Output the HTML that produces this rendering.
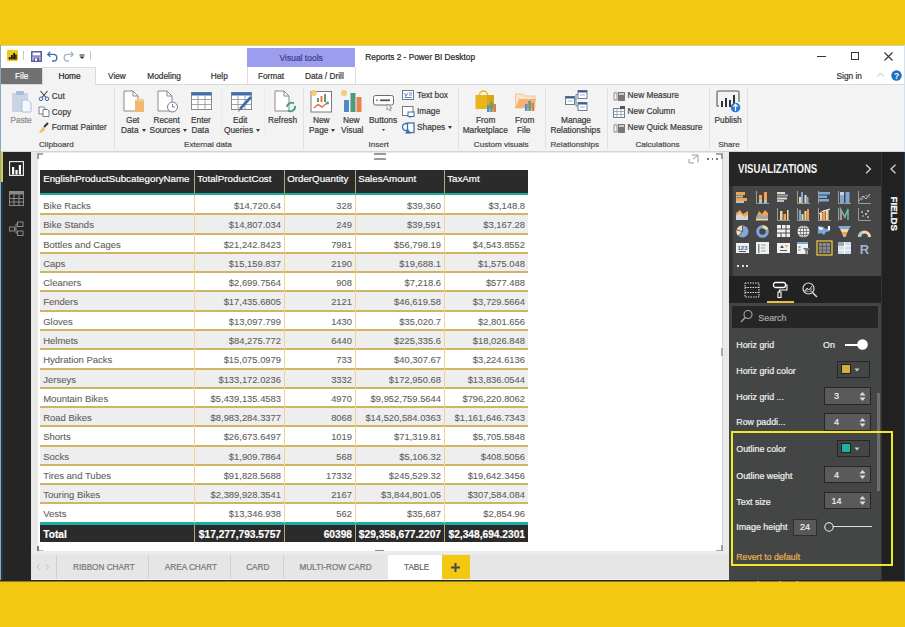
<!DOCTYPE html>
<html><head><meta charset="utf-8">
<style>
*{box-sizing:border-box;margin:0;padding:0}
html,body{width:905px;height:627px;overflow:hidden}
body{position:relative;background:#F2C811;font-family:"Liberation Sans",sans-serif;color:#333}
.a{position:absolute}
.t{position:absolute;white-space:nowrap;line-height:1;-webkit-text-stroke:0.2px currentColor}
svg{position:absolute;overflow:visible}
</style></head>
<body>
<div class="a" style="left:0px;top:45px;width:905px;height:536px;background:#fff;"></div>
<div class="a" style="left:0px;top:45px;width:905px;height:1px;background:#d7cf9a;"></div>
<div class="a" style="left:0px;top:45px;width:1px;height:536px;background:#8aa6bd;"></div>
<div class="a" style="left:904px;top:45px;width:1px;height:107px;background:#d5e0ea;"></div>
<div class="a" style="left:7px;top:50px;width:11px;height:11px;background:#F2C811;border-radius:1px"></div>
<svg style="left:7px;top:50px" width="11" height="11" viewBox="0 0 11 11"><rect x="1.8" y="7" width="1.8" height="2.5" fill="#1a1a1a"/><rect x="4" y="5" width="1.8" height="4.5" fill="#1a1a1a"/><rect x="6.2" y="3" width="1.8" height="6.5" fill="#1a1a1a"/><rect x="8.2" y="4.5" width="1.5" height="5" fill="#1a1a1a"/></svg>
<div class="a" style="left:23px;top:51px;width:1px;height:9px;background:#c8c8c8;"></div>
<svg style="left:31px;top:51px" width="11" height="11" viewBox="0 0 11 11"><path d="M0.8 0.8 H10.2 V10.2 H0.8Z" fill="#fff" stroke="#5d5ca6" stroke-width="1.6"/><rect x="2.5" y="6.3" width="6" height="4" fill="#5d5ca6"/><rect x="4" y="7.3" width="2" height="2.5" fill="#fff"/><rect x="1.5" y="4.5" width="8" height="1.2" fill="#5d5ca6"/></svg>
<svg style="left:47px;top:51px" width="11" height="11" viewBox="0 0 11 11"><path d="M3.2 0.8 L0.8 3.4 L3.4 5.8" fill="none" stroke="#3f6db5" stroke-width="1.4"/><path d="M1.2 3.4 H6.5 A3.3 3.3 0 0 1 6.5 10 H5" fill="none" stroke="#3f6db5" stroke-width="1.4"/></svg>
<svg style="left:63px;top:51px" width="11" height="11" viewBox="0 0 11 11"><path d="M7.8 0.8 L10.2 3.4 L7.6 5.8" fill="none" stroke="#a6b4c8" stroke-width="1.4"/><path d="M9.8 3.4 H4.5 A3.3 3.3 0 0 0 4.5 10 H6" fill="none" stroke="#a6b4c8" stroke-width="1.4"/></svg>
<svg style="left:79px;top:54px" width="6" height="6" viewBox="0 0 6 6"><rect x="0.5" y="0.5" width="5" height="1" fill="#222"/><path d="M0.5 2.5 H5.5 L3 5Z" fill="#222"/></svg>
<div class="a" style="left:90px;top:51px;width:1px;height:9px;background:#c8c8c8;"></div>
<div class="t" style="top:52.50px;font-size:8.3px;color:#262626;left:365.30px;">Reports 2 - Power BI Desktop</div>
<div class="a" style="left:817px;top:56px;width:9px;height:1px;background:#333;"></div>
<div class="a" style="left:851px;top:52px;width:8px;height:8px;border:1px solid #333"></div>
<svg style="left:884px;top:52px" width="9" height="9" viewBox="0 0 9 9"><path d="M0.5 0.5 L8.5 8.5 M8.5 0.5 L0.5 8.5" stroke="#333" stroke-width="1.1"/></svg>
<div class="a" style="left:247px;top:48px;width:108px;height:19px;background:#9D9DEF;"></div>
<div class="t" style="top:53.70px;font-size:8.5px;color:#3c3c86;left:279.50px;">Visual tools</div>
<div class="a" style="left:247px;top:67px;width:1px;height:17px;background:#dcdcec;"></div>
<div class="a" style="left:355px;top:67px;width:1px;height:17px;background:#dcdcec;"></div>
<div class="a" style="left:1px;top:68px;width:41px;height:16px;background:#717171;"></div>
<div class="t" style="top:72.00px;font-size:8.3px;color:#fff;left:15.00px;">File</div>
<div class="t" style="top:72.00px;font-size:8.3px;color:#333;left:108.00px;">View</div>
<div class="t" style="top:72.00px;font-size:8.3px;color:#333;left:147.30px;">Modeling</div>
<div class="t" style="top:72.00px;font-size:8.3px;color:#333;left:210.70px;">Help</div>
<div class="t" style="top:72.00px;font-size:8.3px;color:#333;left:257.90px;">Format</div>
<div class="t" style="top:72.00px;font-size:8.3px;color:#333;left:305.00px;">Data / Drill</div>
<div class="t" style="top:72.00px;font-size:8.3px;color:#333;left:836.50px;">Sign in</div>
<svg style="left:877px;top:72px" width="7" height="5" viewBox="0 0 7 5"><path d="M0.5 4.5 L3.5 1 L6.5 4.5" fill="none" stroke="#bbb" stroke-width="1"/></svg>
<svg style="left:891px;top:70px" width="11" height="11" viewBox="0 0 11 11"><circle cx="5.5" cy="5.5" r="5.2" fill="#1e6fc4"/><text x="5.5" y="9" font-size="8.5" font-weight="bold" text-anchor="middle" fill="#fff" font-family="Liberation Sans">?</text></svg>
<div class="a" style="left:1px;top:84px;width:903px;height:68px;background:#F3F3F3;border-top:1px solid #dadada;border-bottom:1px solid #d4d4d4"></div>
<div class="a" style="left:42px;top:67px;width:54px;height:18px;background:#F3F3F3;border:1px solid #dadada;border-bottom:none"></div>
<div class="t" style="top:72.00px;font-size:8.3px;color:#222;left:58.50px;">Home</div>
<div class="a" style="left:114px;top:88px;width:1px;height:61px;background:#e1e1e1;"></div>
<div class="a" style="left:303px;top:88px;width:1px;height:61px;background:#e1e1e1;"></div>
<div class="a" style="left:458px;top:88px;width:1px;height:61px;background:#e1e1e1;"></div>
<div class="a" style="left:545px;top:88px;width:1px;height:61px;background:#e1e1e1;"></div>
<div class="a" style="left:607px;top:88px;width:1px;height:61px;background:#e1e1e1;"></div>
<div class="a" style="left:709px;top:88px;width:1px;height:61px;background:#e1e1e1;"></div>
<div class="a" style="left:747px;top:88px;width:1px;height:61px;background:#e1e1e1;"></div>
<div class="a" style="left:221px;top:88px;width:1px;height:46px;background:#ececec;"></div>
<div class="a" style="left:264px;top:88px;width:1px;height:46px;background:#ececec;"></div>
<div class="t" style="top:141.00px;font-size:8.1px;color:#484848;left:39.00px;">Clipboard</div>
<div class="t" style="top:141.00px;font-size:8.1px;color:#484848;left:184.00px;">External data</div>
<div class="t" style="top:141.00px;font-size:8.1px;color:#484848;left:368.50px;">Insert</div>
<div class="t" style="top:141.00px;font-size:8.1px;color:#484848;left:473.80px;">Custom visuals</div>
<div class="t" style="top:141.00px;font-size:8.1px;color:#484848;left:550.50px;">Relationships</div>
<div class="t" style="top:141.00px;font-size:8.1px;color:#484848;left:635.40px;">Calculations</div>
<div class="t" style="top:141.00px;font-size:8.1px;color:#484848;left:718.20px;">Share</div>
<svg style="left:11px;top:90px" width="22" height="24" viewBox="0 0 22 24"><rect x="1" y="3" width="16" height="19" fill="#c9d5e6"/><rect x="5" y="1" width="8" height="4" rx="1" fill="#a9bcd8"/><path d="M11 10 H17 L20 13 V22 H11 Z" fill="#f0f8fc" stroke="#a8c4dc" stroke-width="1"/></svg>
<div class="t" style="top:116.00px;font-size:8.3px;color:#8a8a8a;left:10.50px;">Paste</div>
<svg style="left:38px;top:90px" width="12" height="11" viewBox="0 0 12 11"><path d="M2.5 1 L8 7.5 M9.5 1 L4 7.5" stroke="#444" stroke-width="1.1" fill="none"/><circle cx="3" cy="8.8" r="1.8" fill="none" stroke="#3a66b0" stroke-width="1"/><circle cx="9" cy="8.8" r="1.8" fill="none" stroke="#3a66b0" stroke-width="1"/></svg>
<div class="t" style="top:91.80px;font-size:8.3px;color:#3a3a3a;left:51.80px;">Cut</div>
<svg style="left:38px;top:106px" width="12" height="11" viewBox="0 0 12 11"><path d="M1 1 H6 L7 2 V8 H1Z" fill="#fff" stroke="#777" stroke-width="0.9"/><path d="M5 3.5 H9.5 L11 5 V10.5 H5Z" fill="#fff" stroke="#5a6f90" stroke-width="0.9"/></svg>
<div class="t" style="top:107.50px;font-size:8.3px;color:#3a3a3a;left:51.80px;">Copy</div>
<svg style="left:38px;top:122px" width="12" height="11" viewBox="0 0 12 11"><path d="M1 10 L5 5 L7.5 7.5 L3 11Z" fill="#e8c070"/><path d="M6 5 L10 1" stroke="#333" stroke-width="2"/></svg>
<div class="t" style="top:123.30px;font-size:8.3px;color:#3a3a3a;left:51.80px;">Format Painter</div>
<svg style="left:123px;top:90px" width="22" height="23" viewBox="0 0 22 23"><path d="M1 1 H10 L15 6 V21 H1Z" fill="#fff" stroke="#8a8a8a" stroke-width="1"/><path d="M10 1 V6 H15" fill="none" stroke="#8a8a8a" stroke-width="1"/><rect x="12" y="10" width="9" height="12" fill="#f0b870"/><ellipse cx="16.5" cy="10" rx="4.5" ry="1.3" fill="#f6cc90"/></svg>
<div class="t" style="top:116.30px;font-size:8.3px;color:#3a3a3a;left:126.00px;">Get</div>
<div class="t" style="top:126.00px;font-size:8.3px;color:#3a3a3a;left:121.00px;">Data<span style="display:inline-block;width:0;height:0;border-left:2px solid transparent;border-right:2px solid transparent;border-top:3px solid currentColor;vertical-align:1px;margin-left:3px;-webkit-text-stroke:0"></span></div>
<svg style="left:157px;top:90px" width="22" height="24" viewBox="0 0 22 24"><path d="M1 1 H10 L15 6 V21 H1Z" fill="#fff" stroke="#8a8a8a" stroke-width="1"/><path d="M10 1 V6 H15" fill="none" stroke="#8a8a8a" stroke-width="1"/><circle cx="15.5" cy="17" r="5" fill="#fff" stroke="#6f7f98" stroke-width="1"/><path d="M15.5 14 V17 H18" fill="none" stroke="#6f7f98" stroke-width="1"/></svg>
<div class="t" style="top:116.30px;font-size:8.3px;color:#3a3a3a;left:153.50px;">Recent</div>
<div class="t" style="top:126.00px;font-size:8.3px;color:#3a3a3a;left:149.60px;">Sources<span style="display:inline-block;width:0;height:0;border-left:2px solid transparent;border-right:2px solid transparent;border-top:3px solid currentColor;vertical-align:1px;margin-left:3px;-webkit-text-stroke:0"></span></div>
<svg style="left:191px;top:92px" width="22" height="19" viewBox="0 0 22 19"><rect x="0.5" y="0.5" width="20" height="17" fill="#fff" stroke="#8a8a8a" stroke-width="1"/><rect x="0.5" y="0.5" width="20" height="3" fill="#3d6db0"/><path d="M0.5 7.5 H20.5 M0.5 12.5 H20.5 M7 3.5 V17.5 M14 3.5 V17.5" stroke="#9a9a9a" stroke-width="0.9"/></svg>
<div class="t" style="top:116.30px;font-size:8.3px;color:#3a3a3a;left:191.00px;">Enter</div>
<div class="t" style="top:126.00px;font-size:8.3px;color:#3a3a3a;left:191.50px;">Data</div>
<svg style="left:231px;top:92px" width="22" height="21" viewBox="0 0 22 21"><rect x="0.5" y="0.5" width="20" height="17" fill="#fff" stroke="#8a8a8a" stroke-width="1"/><rect x="0.5" y="0.5" width="20" height="3" fill="#3d6db0"/><path d="M0.5 7.5 H20.5 M0.5 12.5 H20.5 M7 3.5 V17.5 M14 3.5 V17.5" stroke="#9a9a9a" stroke-width="0.9"/><path d="M20 5 L9 17" stroke="#3d6db0" stroke-width="2.6"/><path d="M9.5 16.5 L7.5 19.5" stroke="#3d6db0" stroke-width="1"/></svg>
<div class="t" style="top:116.30px;font-size:8.3px;color:#3a3a3a;left:233.00px;">Edit</div>
<div class="t" style="top:126.00px;font-size:8.3px;color:#3a3a3a;left:224.00px;">Queries<span style="display:inline-block;width:0;height:0;border-left:2px solid transparent;border-right:2px solid transparent;border-top:3px solid currentColor;vertical-align:1px;margin-left:3px;-webkit-text-stroke:0"></span></div>
<svg style="left:274px;top:90px" width="22" height="23" viewBox="0 0 22 23"><path d="M1 1 H10 L15 6 V21 H1Z" fill="#fff" stroke="#8a8a8a" stroke-width="1"/><path d="M10 1 V6 H15" fill="none" stroke="#8a8a8a" stroke-width="1"/><path d="M13 17 A4.5 4.5 0 0 1 20 13.5" fill="none" stroke="#3ca07a" stroke-width="1.8"/><path d="M21 16 A4.5 4.5 0 0 1 14 20.5" fill="none" stroke="#3ca07a" stroke-width="1.8"/></svg>
<div class="t" style="top:116.30px;font-size:8.3px;color:#3a3a3a;left:268.00px;">Refresh</div>
<svg style="left:310px;top:89px" width="23" height="24" viewBox="0 0 23 24"><rect x="1" y="2.5" width="20.5" height="20.5" fill="#fff" stroke="#7a7a7a" stroke-width="1"/><rect x="7" y="9" width="2" height="4" fill="#5a9a7a"/><rect x="10.5" y="7" width="2" height="6" fill="#e07a4a"/><rect x="14" y="5" width="2" height="8" fill="#5a9a7a"/><path d="M4 19 L8 15.5 L12 18 L17 14" fill="none" stroke="#e07a4a" stroke-width="1.6"/><circle cx="17.5" cy="14" r="1.5" fill="#5a9a7a"/><circle cx="4" cy="4" r="3" fill="#f3c96a" opacity="0.9"/></svg>
<div class="t" style="top:116.30px;font-size:8.3px;color:#3a3a3a;left:313.00px;">New</div>
<div class="t" style="top:126.00px;font-size:8.3px;color:#3a3a3a;left:309.00px;">Page<span style="display:inline-block;width:0;height:0;border-left:2px solid transparent;border-right:2px solid transparent;border-top:3px solid currentColor;vertical-align:1px;margin-left:3px;-webkit-text-stroke:0"></span></div>
<svg style="left:340px;top:89px" width="23" height="24" viewBox="0 0 23 24"><circle cx="4" cy="4" r="3" fill="#f3c96a" opacity="0.9"/><rect x="4" y="11" width="5" height="12" fill="#4d8cc8"/><rect x="10.5" y="4" width="5" height="19" fill="#4e9a7e"/><rect x="16.5" y="8" width="5" height="15" fill="#e8834a"/></svg>
<div class="t" style="top:116.30px;font-size:8.3px;color:#3a3a3a;left:343.00px;">New</div>
<div class="t" style="top:126.00px;font-size:8.3px;color:#3a3a3a;left:341.00px;">Visual</div>
<svg style="left:373px;top:95px" width="22" height="16" viewBox="0 0 22 16"><rect x="0.5" y="0.5" width="20" height="9.5" rx="2" fill="#fff" stroke="#6a6a6a" stroke-width="1"/><circle cx="4" cy="5.2" r="1" fill="#888"/><rect x="7" y="4.4" width="10" height="1.8" fill="#555"/><path d="M14 9 V15 L15.5 13.5 L17 16 L18 15.5 L17 13 H19Z" fill="#fff" stroke="#777" stroke-width="0.7"/></svg>
<div class="t" style="top:116.30px;font-size:8.3px;color:#3a3a3a;left:369.00px;">Buttons</div>
<div class="a" style="left:381.5px;top:128.5px;width:4px;height:2.5px;background:#3a3a3a;clip-path:polygon(0 0,100% 0,50% 100%)"></div>
<svg style="left:402px;top:90px" width="12" height="10" viewBox="0 0 12 10"><rect x="0.5" y="0.5" width="11" height="9" fill="#fff" stroke="#6a7a90" stroke-width="1"/><path d="M2.5 3 L4 6.5 L5.5 3 M7 3 H10 M7 5 H10 M2.5 7.5 H10" stroke="#3d6db0" stroke-width="0.8" fill="none"/></svg>
<div class="t" style="top:91.40px;font-size:8.3px;color:#3a3a3a;left:417.00px;">Text box</div>
<svg style="left:402px;top:106px" width="13" height="12" viewBox="0 0 13 12"><rect x="0.5" y="0.5" width="10.5" height="9" fill="#fff" stroke="#7a7a7a" stroke-width="1"/><rect x="6" y="6" width="6" height="4.5" fill="#fff" stroke="#3d6db0" stroke-width="1"/><path d="M8 10.5 V12" stroke="#3d6db0"/></svg>
<div class="t" style="top:107.00px;font-size:8.3px;color:#3a3a3a;left:417.00px;">Image</div>
<svg style="left:402px;top:122px" width="13" height="12" viewBox="0 0 13 12"><circle cx="4" cy="5" r="3.5" fill="#fff" stroke="#3d6db0" stroke-width="1.3"/><rect x="5.5" y="1" width="6.5" height="9.5" fill="#fff" stroke="#3d6db0" stroke-width="1.3"/><path d="M3 11.5 L6 7 L9 11.5Z" fill="#3d6db0"/></svg>
<div class="t" style="top:123.00px;font-size:8.3px;color:#3a3a3a;left:417.00px;">Shapes<span style="display:inline-block;width:0;height:0;border-left:2px solid transparent;border-right:2px solid transparent;border-top:3px solid currentColor;vertical-align:1px;margin-left:3px;-webkit-text-stroke:0"></span></div>
<svg style="left:475px;top:88px" width="23" height="26" viewBox="0 0 23 26"><path d="M4.5 7 A4 4 0 0 1 12.5 7" fill="none" stroke="#e8b820" stroke-width="1.3"/><path d="M0.5 7 H19 V21 H0.5Z" fill="#e8b51e"/><path d="M12 7 H19 V21 H12Z" fill="#d9a514"/><rect x="12" y="17" width="2.6" height="7" fill="#5a8ec8"/><rect x="15.2" y="14" width="2.6" height="10" fill="#58a07e"/><rect x="18.4" y="16" width="2.6" height="8" fill="#e07a4a"/></svg>
<div class="t" style="top:116.30px;font-size:8.3px;color:#3a3a3a;left:476.00px;">From</div>
<div class="t" style="top:126.00px;font-size:8.3px;color:#3a3a3a;left:462.70px;">Marketplace</div>
<svg style="left:515px;top:92px" width="22" height="20" viewBox="0 0 22 20"><path d="M0.5 2 H8 L10 4 H20 V16 H0.5Z" fill="#fbe3c4" stroke="#f0c59a" stroke-width="1"/><path d="M0.5 16 L4 7 H21 L18 16Z" fill="#f1b27a"/><rect x="10" y="12" width="2.6" height="7" fill="#5a8ec8"/><rect x="13.3" y="9" width="2.6" height="10" fill="#58a07e"/><rect x="16.6" y="11" width="2.6" height="8" fill="#e07a4a"/></svg>
<div class="t" style="top:116.30px;font-size:8.3px;color:#3a3a3a;left:515.00px;">From</div>
<div class="t" style="top:126.00px;font-size:8.3px;color:#3a3a3a;left:517.00px;">File</div>
<svg style="left:565px;top:90px" width="23" height="22" viewBox="0 0 23 22"><path d="M9.5 10 H11 V4.5 H13 M11 10 V16 H13" fill="none" stroke="#6a7f9a" stroke-width="1"/><rect x="0.5" y="6.5" width="9" height="8" fill="#fff" stroke="#6a7f9a" stroke-width="1"/><rect x="0.5" y="6.5" width="9" height="2" fill="#3d5f8f"/><path d="M2.5 11.0 H7.5" stroke="#8a9ab0" stroke-width="0.8"/><rect x="13" y="0.5" width="9" height="8" fill="#fff" stroke="#6a7f9a" stroke-width="1"/><rect x="13" y="0.5" width="9" height="2" fill="#3d5f8f"/><path d="M15 5.0 H20" stroke="#8a9ab0" stroke-width="0.8"/><rect x="13" y="12.5" width="9" height="8" fill="#fff" stroke="#6a7f9a" stroke-width="1"/><rect x="13" y="12.5" width="9" height="2" fill="#3d5f8f"/><path d="M15 17.0 H20" stroke="#8a9ab0" stroke-width="0.8"/></svg>
<div class="t" style="top:116.30px;font-size:8.3px;color:#3a3a3a;left:561.00px;">Manage</div>
<div class="t" style="top:126.00px;font-size:8.3px;color:#3a3a3a;left:550.50px;">Relationships</div>
<svg style="left:613px;top:90px" width="13" height="12" viewBox="0 0 13 12"><path d="M3 0.5 L4 3 L2 2" fill="#f0c080"/><rect x="1" y="3" width="3" height="7" fill="none" stroke="#888" stroke-width="0.9"/><rect x="5" y="2" width="7" height="9" fill="#777"/><rect x="6" y="3" width="5" height="2" fill="#ccc"/></svg>
<div class="t" style="top:91.40px;font-size:8.3px;color:#3a3a3a;left:627.60px;">New Measure</div>
<svg style="left:613px;top:106px" width="13" height="12" viewBox="0 0 13 12"><rect x="0.5" y="2.5" width="11" height="9" fill="#fff" stroke="#6a7f9a" stroke-width="1"/><path d="M0.5 5.5 H11.5 M0.5 8.5 H11.5 M4 2.5 V11.5 M8 2.5 V11.5" stroke="#8a9ab0" stroke-width="0.8"/><rect x="7" y="0" width="5" height="3" fill="#555"/></svg>
<div class="t" style="top:107.00px;font-size:8.3px;color:#3a3a3a;left:627.60px;">New Column</div>
<svg style="left:613px;top:122px" width="13" height="12" viewBox="0 0 13 12"><path d="M3 0.5 L4 3 L2 2" fill="#f0c080"/><rect x="1" y="3" width="3" height="7" fill="none" stroke="#888" stroke-width="0.9"/><rect x="5" y="2" width="7" height="9" fill="#777"/><rect x="6" y="3" width="5" height="2" fill="#ccc"/></svg>
<div class="t" style="top:123.00px;font-size:8.3px;color:#3a3a3a;left:627.60px;">New Quick Measure</div>
<svg style="left:716px;top:90px" width="26" height="23" viewBox="0 0 26 23"><path d="M3 16 H1 V2 Q1 1 2 1 H22 Q23 1 23 2 V12" fill="none" stroke="#555" stroke-width="1.1"/><rect x="5" y="11" width="2" height="6" fill="#333"/><rect x="9" y="8" width="2" height="9" fill="#333"/><rect x="13" y="10" width="2" height="7" fill="#333"/><rect x="17" y="5" width="2" height="10" fill="#333"/><circle cx="19.5" cy="17.5" r="4.8" fill="#2b7cd3"/><path d="M19.5 21 V14.5 M17.3 16.7 L19.5 14.3 L21.7 16.7" stroke="#fff" stroke-width="1.2" fill="none"/></svg>
<div class="t" style="top:116.30px;font-size:8.3px;color:#3a3a3a;left:714.50px;">Publish</div>
<div class="a" style="left:1px;top:152px;width:30px;height:429px;background:#252526;"></div>
<div class="a" style="left:1px;top:152px;width:2px;height:30px;background:#d8cf3a;"></div>
<div class="a" style="left:1px;top:182px;width:2px;height:397px;background:#22384a;"></div>
<svg style="left:9px;top:161px" width="15" height="15" viewBox="0 0 15 15"><rect x="0.6" y="0.6" width="13.8" height="13.8" fill="none" stroke="#f4f4f4" stroke-width="1.1"/><rect x="3" y="6" width="2.2" height="7.5" fill="#fff"/><rect x="6.4" y="9" width="2.2" height="4.5" fill="#fff"/><rect x="9.8" y="4" width="2.2" height="9.5" fill="#fff"/></svg>
<svg style="left:9px;top:191px" width="15" height="15" viewBox="0 0 15 15"><rect x="0.5" y="0.5" width="14" height="14" fill="none" stroke="#8a8a8a" stroke-width="1"/><rect x="0.5" y="0.5" width="14" height="3" fill="#8a8a8a"/><path d="M0.5 7.5 H14.5 M0.5 11 H14.5 M5 3.5 V14.5 M10 3.5 V14.5" stroke="#8a8a8a" stroke-width="1.1"/></svg>
<svg style="left:9px;top:221px" width="15" height="16" viewBox="0 0 15 16"><rect x="0.5" y="6" width="5" height="4" fill="none" stroke="#8a8a8a" stroke-width="1"/><rect x="8.5" y="1" width="5.5" height="4.5" fill="none" stroke="#8a8a8a" stroke-width="1"/><rect x="8.5" y="10" width="5.5" height="4.5" fill="none" stroke="#8a8a8a" stroke-width="1"/><path d="M5.5 8 H7 V3 H8.5 M7 8 V12 H8.5" fill="none" stroke="#8a8a8a" stroke-width="1"/></svg>
<div class="a" style="left:31px;top:152px;width:698px;height:402px;background:#E9E9E9;"></div>
<div class="a" style="left:38px;top:153px;width:685px;height:398px;background:#fff;"></div>
<div class="a" style="left:722px;top:153px;width:1px;height:398px;background:#d4d4d4;"></div>
<svg style="left:37px;top:153px" width="7" height="6" viewBox="0 0 7 6"><path d="M1 6 V1 H6" fill="none" stroke="#8a8a8a" stroke-width="1.6"/></svg>
<svg style="left:716px;top:153px" width="7" height="6" viewBox="0 0 7 6"><path d="M0 1 H6 V6" fill="none" stroke="#8a8a8a" stroke-width="1.6"/></svg>
<svg style="left:37px;top:546px" width="7" height="7" viewBox="0 0 7 7"><path d="M1 0 V5.5 H6.5" fill="none" stroke="#7a7a7a" stroke-width="2"/></svg>
<svg style="left:716px;top:545px" width="7" height="7" viewBox="0 0 7 7"><path d="M6 0 V6 H0" fill="none" stroke="#8a8a8a" stroke-width="1.6"/></svg>
<div class="a" style="left:374px;top:153px;width:12px;height:1.5px;background:#9a9a9a;"></div>
<div class="a" style="left:374px;top:158px;width:12px;height:1.5px;background:#9a9a9a;"></div>
<div class="a" style="left:375px;top:550px;width:9px;height:2.5px;background:#8a8a8a;"></div>
<div class="a" style="left:721px;top:348px;width:2px;height:8px;background:#aaa;"></div>
<svg style="left:688px;top:154px" width="11" height="10" viewBox="0 0 11 10"><path d="M4 1 H10 V8.5 M1 5 V9 H6" fill="none" stroke="#999" stroke-width="1"/><path d="M5 5 L9 2" stroke="#999" stroke-width="1"/></svg>
<div class="a" style="left:707px;top:158px;width:1.6px;height:1.6px;background:#777;"></div>
<div class="a" style="left:711.5px;top:158px;width:1.6px;height:1.6px;background:#777;"></div>
<div class="a" style="left:716px;top:158px;width:1.6px;height:1.6px;background:#777;"></div>
<div class="a" style="left:40px;top:170px;width:488px;height:23px;background:#2b2b2b;"></div>
<div class="a" style="left:40px;top:193px;width:488px;height:2.4px;background:#1BAE9E;"></div>
<div class="a" style="left:40px;top:195.50px;width:488px;height:19.58px;background:#fff;"></div>
<div class="a" style="left:40px;top:214.78px;width:488px;height:19.58px;background:#EEEEEE;"></div>
<div class="a" style="left:40px;top:234.06px;width:488px;height:19.58px;background:#fff;"></div>
<div class="a" style="left:40px;top:253.34px;width:488px;height:19.58px;background:#EEEEEE;"></div>
<div class="a" style="left:40px;top:272.62px;width:488px;height:19.58px;background:#fff;"></div>
<div class="a" style="left:40px;top:291.90px;width:488px;height:19.58px;background:#EEEEEE;"></div>
<div class="a" style="left:40px;top:311.18px;width:488px;height:19.58px;background:#fff;"></div>
<div class="a" style="left:40px;top:330.46px;width:488px;height:19.58px;background:#EEEEEE;"></div>
<div class="a" style="left:40px;top:349.74px;width:488px;height:19.58px;background:#fff;"></div>
<div class="a" style="left:40px;top:369.02px;width:488px;height:19.58px;background:#EEEEEE;"></div>
<div class="a" style="left:40px;top:388.30px;width:488px;height:19.58px;background:#fff;"></div>
<div class="a" style="left:40px;top:407.58px;width:488px;height:19.58px;background:#EEEEEE;"></div>
<div class="a" style="left:40px;top:426.86px;width:488px;height:19.58px;background:#fff;"></div>
<div class="a" style="left:40px;top:446.14px;width:488px;height:19.58px;background:#EEEEEE;"></div>
<div class="a" style="left:40px;top:465.42px;width:488px;height:19.58px;background:#fff;"></div>
<div class="a" style="left:40px;top:484.70px;width:488px;height:19.58px;background:#EEEEEE;"></div>
<div class="a" style="left:40px;top:503.98px;width:488px;height:19.58px;background:#fff;"></div>
<div class="a" style="left:40px;top:213px;width:488px;height:2px;background:#CFB463;"></div>
<div class="a" style="left:40px;top:233px;width:488px;height:2px;background:#CFB463;"></div>
<div class="a" style="left:40px;top:252px;width:488px;height:2px;background:#CFB463;"></div>
<div class="a" style="left:40px;top:271px;width:488px;height:2px;background:#CFB463;"></div>
<div class="a" style="left:40px;top:290px;width:488px;height:2px;background:#CFB463;"></div>
<div class="a" style="left:40px;top:310px;width:488px;height:2px;background:#CFB463;"></div>
<div class="a" style="left:40px;top:329px;width:488px;height:2px;background:#CFB463;"></div>
<div class="a" style="left:40px;top:348px;width:488px;height:2px;background:#CFB463;"></div>
<div class="a" style="left:40px;top:368px;width:488px;height:2px;background:#CFB463;"></div>
<div class="a" style="left:40px;top:387px;width:488px;height:2px;background:#CFB463;"></div>
<div class="a" style="left:40px;top:406px;width:488px;height:2px;background:#CFB463;"></div>
<div class="a" style="left:40px;top:425px;width:488px;height:2px;background:#CFB463;"></div>
<div class="a" style="left:40px;top:445px;width:488px;height:2px;background:#CFB463;"></div>
<div class="a" style="left:40px;top:464px;width:488px;height:2px;background:#CFB463;"></div>
<div class="a" style="left:40px;top:483px;width:488px;height:2px;background:#CFB463;"></div>
<div class="a" style="left:40px;top:502px;width:488px;height:2px;background:#CFB463;"></div>
<div class="a" style="left:40px;top:522px;width:488px;height:3px;background:#1BAE9E;"></div>
<div class="a" style="left:40px;top:525px;width:488px;height:16.8px;background:#2b2b2b;"></div>
<div class="a" style="left:194px;top:170px;width:1px;height:23px;background:#BBA970;"></div>
<div class="a" style="left:194px;top:195px;width:1px;height:328px;background:#EBD88A;"></div>
<div class="a" style="left:194px;top:525px;width:1px;height:17px;background:#BBA970;"></div>
<div class="a" style="left:284px;top:170px;width:1px;height:23px;background:#BBA970;"></div>
<div class="a" style="left:284px;top:195px;width:1px;height:328px;background:#EBD88A;"></div>
<div class="a" style="left:284px;top:525px;width:1px;height:17px;background:#BBA970;"></div>
<div class="a" style="left:355px;top:170px;width:1px;height:23px;background:#BBA970;"></div>
<div class="a" style="left:355px;top:195px;width:1px;height:328px;background:#EBD88A;"></div>
<div class="a" style="left:355px;top:525px;width:1px;height:17px;background:#BBA970;"></div>
<div class="a" style="left:444px;top:170px;width:1px;height:23px;background:#BBA970;"></div>
<div class="a" style="left:444px;top:195px;width:1px;height:328px;background:#EBD88A;"></div>
<div class="a" style="left:444px;top:525px;width:1px;height:17px;background:#BBA970;"></div>
<div class="t" style="top:174.20px;font-size:9.75px;color:#fff;left:43.20px;">EnglishProductSubcategoryName</div>
<div class="t" style="top:174.20px;font-size:9.75px;color:#fff;left:197.20px;">TotalProductCost</div>
<div class="t" style="top:174.20px;font-size:9.75px;color:#fff;left:287.20px;">OrderQuantity</div>
<div class="t" style="top:174.20px;font-size:9.75px;color:#fff;left:358.20px;">SalesAmount</div>
<div class="t" style="top:174.20px;font-size:9.75px;color:#fff;left:447.20px;">TaxAmt</div>
<div class="t" style="top:201.00px;font-size:9.5px;color:#5f5f5f;left:43.20px;-webkit-text-stroke:0.1px currentColor">Bike Racks</div>
<div class="t" style="top:201.00px;font-size:9.4px;color:#5f5f5f;right:624.00px;-webkit-text-stroke:0.1px currentColor">$14,720.64</div>
<div class="t" style="top:201.00px;font-size:9.4px;color:#5f5f5f;right:553.00px;-webkit-text-stroke:0.1px currentColor">328</div>
<div class="t" style="top:201.00px;font-size:9.4px;color:#5f5f5f;right:464.00px;-webkit-text-stroke:0.1px currentColor">$39,360</div>
<div class="t" style="top:201.00px;font-size:9.4px;color:#5f5f5f;right:380.00px;-webkit-text-stroke:0.1px currentColor">$3,148.8</div>
<div class="t" style="top:220.28px;font-size:9.5px;color:#5f5f5f;left:43.20px;-webkit-text-stroke:0.1px currentColor">Bike Stands</div>
<div class="t" style="top:220.28px;font-size:9.4px;color:#5f5f5f;right:624.00px;-webkit-text-stroke:0.1px currentColor">$14,807.034</div>
<div class="t" style="top:220.28px;font-size:9.4px;color:#5f5f5f;right:553.00px;-webkit-text-stroke:0.1px currentColor">249</div>
<div class="t" style="top:220.28px;font-size:9.4px;color:#5f5f5f;right:464.00px;-webkit-text-stroke:0.1px currentColor">$39,591</div>
<div class="t" style="top:220.28px;font-size:9.4px;color:#5f5f5f;right:380.00px;-webkit-text-stroke:0.1px currentColor">$3,167.28</div>
<div class="t" style="top:239.56px;font-size:9.5px;color:#5f5f5f;left:43.20px;-webkit-text-stroke:0.1px currentColor">Bottles and Cages</div>
<div class="t" style="top:239.56px;font-size:9.4px;color:#5f5f5f;right:624.00px;-webkit-text-stroke:0.1px currentColor">$21,242.8423</div>
<div class="t" style="top:239.56px;font-size:9.4px;color:#5f5f5f;right:553.00px;-webkit-text-stroke:0.1px currentColor">7981</div>
<div class="t" style="top:239.56px;font-size:9.4px;color:#5f5f5f;right:464.00px;-webkit-text-stroke:0.1px currentColor">$56,798.19</div>
<div class="t" style="top:239.56px;font-size:9.4px;color:#5f5f5f;right:380.00px;-webkit-text-stroke:0.1px currentColor">$4,543.8552</div>
<div class="t" style="top:258.84px;font-size:9.5px;color:#5f5f5f;left:43.20px;-webkit-text-stroke:0.1px currentColor">Caps</div>
<div class="t" style="top:258.84px;font-size:9.4px;color:#5f5f5f;right:624.00px;-webkit-text-stroke:0.1px currentColor">$15,159.837</div>
<div class="t" style="top:258.84px;font-size:9.4px;color:#5f5f5f;right:553.00px;-webkit-text-stroke:0.1px currentColor">2190</div>
<div class="t" style="top:258.84px;font-size:9.4px;color:#5f5f5f;right:464.00px;-webkit-text-stroke:0.1px currentColor">$19,688.1</div>
<div class="t" style="top:258.84px;font-size:9.4px;color:#5f5f5f;right:380.00px;-webkit-text-stroke:0.1px currentColor">$1,575.048</div>
<div class="t" style="top:278.12px;font-size:9.5px;color:#5f5f5f;left:43.20px;-webkit-text-stroke:0.1px currentColor">Cleaners</div>
<div class="t" style="top:278.12px;font-size:9.4px;color:#5f5f5f;right:624.00px;-webkit-text-stroke:0.1px currentColor">$2,699.7564</div>
<div class="t" style="top:278.12px;font-size:9.4px;color:#5f5f5f;right:553.00px;-webkit-text-stroke:0.1px currentColor">908</div>
<div class="t" style="top:278.12px;font-size:9.4px;color:#5f5f5f;right:464.00px;-webkit-text-stroke:0.1px currentColor">$7,218.6</div>
<div class="t" style="top:278.12px;font-size:9.4px;color:#5f5f5f;right:380.00px;-webkit-text-stroke:0.1px currentColor">$577.488</div>
<div class="t" style="top:297.40px;font-size:9.5px;color:#5f5f5f;left:43.20px;-webkit-text-stroke:0.1px currentColor">Fenders</div>
<div class="t" style="top:297.40px;font-size:9.4px;color:#5f5f5f;right:624.00px;-webkit-text-stroke:0.1px currentColor">$17,435.6805</div>
<div class="t" style="top:297.40px;font-size:9.4px;color:#5f5f5f;right:553.00px;-webkit-text-stroke:0.1px currentColor">2121</div>
<div class="t" style="top:297.40px;font-size:9.4px;color:#5f5f5f;right:464.00px;-webkit-text-stroke:0.1px currentColor">$46,619.58</div>
<div class="t" style="top:297.40px;font-size:9.4px;color:#5f5f5f;right:380.00px;-webkit-text-stroke:0.1px currentColor">$3,729.5664</div>
<div class="t" style="top:316.68px;font-size:9.5px;color:#5f5f5f;left:43.20px;-webkit-text-stroke:0.1px currentColor">Gloves</div>
<div class="t" style="top:316.68px;font-size:9.4px;color:#5f5f5f;right:624.00px;-webkit-text-stroke:0.1px currentColor">$13,097.799</div>
<div class="t" style="top:316.68px;font-size:9.4px;color:#5f5f5f;right:553.00px;-webkit-text-stroke:0.1px currentColor">1430</div>
<div class="t" style="top:316.68px;font-size:9.4px;color:#5f5f5f;right:464.00px;-webkit-text-stroke:0.1px currentColor">$35,020.7</div>
<div class="t" style="top:316.68px;font-size:9.4px;color:#5f5f5f;right:380.00px;-webkit-text-stroke:0.1px currentColor">$2,801.656</div>
<div class="t" style="top:335.96px;font-size:9.5px;color:#5f5f5f;left:43.20px;-webkit-text-stroke:0.1px currentColor">Helmets</div>
<div class="t" style="top:335.96px;font-size:9.4px;color:#5f5f5f;right:624.00px;-webkit-text-stroke:0.1px currentColor">$84,275.772</div>
<div class="t" style="top:335.96px;font-size:9.4px;color:#5f5f5f;right:553.00px;-webkit-text-stroke:0.1px currentColor">6440</div>
<div class="t" style="top:335.96px;font-size:9.4px;color:#5f5f5f;right:464.00px;-webkit-text-stroke:0.1px currentColor">$225,335.6</div>
<div class="t" style="top:335.96px;font-size:9.4px;color:#5f5f5f;right:380.00px;-webkit-text-stroke:0.1px currentColor">$18,026.848</div>
<div class="t" style="top:355.24px;font-size:9.5px;color:#5f5f5f;left:43.20px;-webkit-text-stroke:0.1px currentColor">Hydration Packs</div>
<div class="t" style="top:355.24px;font-size:9.4px;color:#5f5f5f;right:624.00px;-webkit-text-stroke:0.1px currentColor">$15,075.0979</div>
<div class="t" style="top:355.24px;font-size:9.4px;color:#5f5f5f;right:553.00px;-webkit-text-stroke:0.1px currentColor">733</div>
<div class="t" style="top:355.24px;font-size:9.4px;color:#5f5f5f;right:464.00px;-webkit-text-stroke:0.1px currentColor">$40,307.67</div>
<div class="t" style="top:355.24px;font-size:9.4px;color:#5f5f5f;right:380.00px;-webkit-text-stroke:0.1px currentColor">$3,224.6136</div>
<div class="t" style="top:374.52px;font-size:9.5px;color:#5f5f5f;left:43.20px;-webkit-text-stroke:0.1px currentColor">Jerseys</div>
<div class="t" style="top:374.52px;font-size:9.4px;color:#5f5f5f;right:624.00px;-webkit-text-stroke:0.1px currentColor">$133,172.0236</div>
<div class="t" style="top:374.52px;font-size:9.4px;color:#5f5f5f;right:553.00px;-webkit-text-stroke:0.1px currentColor">3332</div>
<div class="t" style="top:374.52px;font-size:9.4px;color:#5f5f5f;right:464.00px;-webkit-text-stroke:0.1px currentColor">$172,950.68</div>
<div class="t" style="top:374.52px;font-size:9.4px;color:#5f5f5f;right:380.00px;-webkit-text-stroke:0.1px currentColor">$13,836.0544</div>
<div class="t" style="top:393.80px;font-size:9.5px;color:#5f5f5f;left:43.20px;-webkit-text-stroke:0.1px currentColor">Mountain Bikes</div>
<div class="t" style="top:393.80px;font-size:9.4px;color:#5f5f5f;right:624.00px;-webkit-text-stroke:0.1px currentColor">$5,439,135.4583</div>
<div class="t" style="top:393.80px;font-size:9.4px;color:#5f5f5f;right:553.00px;-webkit-text-stroke:0.1px currentColor">4970</div>
<div class="t" style="top:393.80px;font-size:9.4px;color:#5f5f5f;right:464.00px;-webkit-text-stroke:0.1px currentColor">$9,952,759.5644</div>
<div class="t" style="top:393.80px;font-size:9.4px;color:#5f5f5f;right:380.00px;-webkit-text-stroke:0.1px currentColor">$796,220.8062</div>
<div class="t" style="top:413.08px;font-size:9.5px;color:#5f5f5f;left:43.20px;-webkit-text-stroke:0.1px currentColor">Road Bikes</div>
<div class="t" style="top:413.08px;font-size:9.4px;color:#5f5f5f;right:624.00px;-webkit-text-stroke:0.1px currentColor">$8,983,284.3377</div>
<div class="t" style="top:413.08px;font-size:9.4px;color:#5f5f5f;right:553.00px;-webkit-text-stroke:0.1px currentColor">8068</div>
<div class="t" style="top:413.08px;font-size:9.4px;color:#5f5f5f;right:464.00px;-webkit-text-stroke:0.1px currentColor">$14,520,584.0363</div>
<div class="t" style="top:413.08px;font-size:9.4px;color:#5f5f5f;right:380.00px;-webkit-text-stroke:0.1px currentColor">$1,161,646.7343</div>
<div class="t" style="top:432.36px;font-size:9.5px;color:#5f5f5f;left:43.20px;-webkit-text-stroke:0.1px currentColor">Shorts</div>
<div class="t" style="top:432.36px;font-size:9.4px;color:#5f5f5f;right:624.00px;-webkit-text-stroke:0.1px currentColor">$26,673.6497</div>
<div class="t" style="top:432.36px;font-size:9.4px;color:#5f5f5f;right:553.00px;-webkit-text-stroke:0.1px currentColor">1019</div>
<div class="t" style="top:432.36px;font-size:9.4px;color:#5f5f5f;right:464.00px;-webkit-text-stroke:0.1px currentColor">$71,319.81</div>
<div class="t" style="top:432.36px;font-size:9.4px;color:#5f5f5f;right:380.00px;-webkit-text-stroke:0.1px currentColor">$5,705.5848</div>
<div class="t" style="top:451.64px;font-size:9.5px;color:#5f5f5f;left:43.20px;-webkit-text-stroke:0.1px currentColor">Socks</div>
<div class="t" style="top:451.64px;font-size:9.4px;color:#5f5f5f;right:624.00px;-webkit-text-stroke:0.1px currentColor">$1,909.7864</div>
<div class="t" style="top:451.64px;font-size:9.4px;color:#5f5f5f;right:553.00px;-webkit-text-stroke:0.1px currentColor">568</div>
<div class="t" style="top:451.64px;font-size:9.4px;color:#5f5f5f;right:464.00px;-webkit-text-stroke:0.1px currentColor">$5,106.32</div>
<div class="t" style="top:451.64px;font-size:9.4px;color:#5f5f5f;right:380.00px;-webkit-text-stroke:0.1px currentColor">$408.5056</div>
<div class="t" style="top:470.92px;font-size:9.5px;color:#5f5f5f;left:43.20px;-webkit-text-stroke:0.1px currentColor">Tires and Tubes</div>
<div class="t" style="top:470.92px;font-size:9.4px;color:#5f5f5f;right:624.00px;-webkit-text-stroke:0.1px currentColor">$91,828.5688</div>
<div class="t" style="top:470.92px;font-size:9.4px;color:#5f5f5f;right:553.00px;-webkit-text-stroke:0.1px currentColor">17332</div>
<div class="t" style="top:470.92px;font-size:9.4px;color:#5f5f5f;right:464.00px;-webkit-text-stroke:0.1px currentColor">$245,529.32</div>
<div class="t" style="top:470.92px;font-size:9.4px;color:#5f5f5f;right:380.00px;-webkit-text-stroke:0.1px currentColor">$19,642.3456</div>
<div class="t" style="top:490.20px;font-size:9.5px;color:#5f5f5f;left:43.20px;-webkit-text-stroke:0.1px currentColor">Touring Bikes</div>
<div class="t" style="top:490.20px;font-size:9.4px;color:#5f5f5f;right:624.00px;-webkit-text-stroke:0.1px currentColor">$2,389,928.3541</div>
<div class="t" style="top:490.20px;font-size:9.4px;color:#5f5f5f;right:553.00px;-webkit-text-stroke:0.1px currentColor">2167</div>
<div class="t" style="top:490.20px;font-size:9.4px;color:#5f5f5f;right:464.00px;-webkit-text-stroke:0.1px currentColor">$3,844,801.05</div>
<div class="t" style="top:490.20px;font-size:9.4px;color:#5f5f5f;right:380.00px;-webkit-text-stroke:0.1px currentColor">$307,584.084</div>
<div class="t" style="top:509.48px;font-size:9.5px;color:#5f5f5f;left:43.20px;-webkit-text-stroke:0.1px currentColor">Vests</div>
<div class="t" style="top:509.48px;font-size:9.4px;color:#5f5f5f;right:624.00px;-webkit-text-stroke:0.1px currentColor">$13,346.938</div>
<div class="t" style="top:509.48px;font-size:9.4px;color:#5f5f5f;right:553.00px;-webkit-text-stroke:0.1px currentColor">562</div>
<div class="t" style="top:509.48px;font-size:9.4px;color:#5f5f5f;right:464.00px;-webkit-text-stroke:0.1px currentColor">$35,687</div>
<div class="t" style="top:509.48px;font-size:9.4px;color:#5f5f5f;right:380.00px;-webkit-text-stroke:0.1px currentColor">$2,854.96</div>
<div class="t" style="top:530.00px;font-size:10.2px;color:#fff;font-weight:bold;left:43.20px;">Total</div>
<div class="t" style="top:530.00px;font-size:10.2px;color:#fff;font-weight:bold;right:624.00px;">$17,277,793.5757</div>
<div class="t" style="top:530.00px;font-size:10.2px;color:#fff;font-weight:bold;right:553.00px;">60398</div>
<div class="t" style="top:530.00px;font-size:10.2px;color:#fff;font-weight:bold;right:464.00px;">$29,358,677.2207</div>
<div class="t" style="top:530.00px;font-size:10.2px;color:#fff;font-weight:bold;right:380.00px;">$2,348,694.2301</div>
<div class="a" style="left:31px;top:551px;width:698px;height:3px;background:#ececec;"></div>
<div class="a" style="left:31px;top:554px;width:698px;height:25px;background:#E6E6E6;"></div>
<div class="a" style="left:31px;top:579px;width:698px;height:1px;background:#f2f4f7;"></div>
<svg style="left:36px;top:563px" width="14" height="8" viewBox="0 0 14 8"><path d="M3.5 1 L1 4 L3.5 7 M10 1 L12.5 4 L10 7" fill="none" stroke="#c4c4c4" stroke-width="1"/></svg>
<div class="a" style="left:56px;top:555px;width:1px;height:24px;background:#cfcfcf;"></div>
<div class="a" style="left:148px;top:555px;width:1px;height:24px;background:#cfcfcf;"></div>
<div class="a" style="left:230px;top:555px;width:1px;height:24px;background:#cfcfcf;"></div>
<div class="a" style="left:283px;top:555px;width:1px;height:24px;background:#cfcfcf;"></div>
<div class="t" style="top:564.20px;font-size:8.2px;color:#767676;left:73.00px;">RIBBON CHART</div>
<div class="t" style="top:564.20px;font-size:8.2px;color:#767676;left:164.80px;">AREA CHART</div>
<div class="t" style="top:564.20px;font-size:8.2px;color:#767676;left:246.20px;">CARD</div>
<div class="t" style="top:564.20px;font-size:8.2px;color:#767676;left:299.40px;">MULTI-ROW CARD</div>
<div class="a" style="left:388px;top:555px;width:54px;height:24px;background:#fff;"></div>
<div class="t" style="top:564.40px;font-size:8.2px;color:#666;left:404.00px;">TABLE</div>
<div class="a" style="left:442px;top:555px;width:28px;height:24px;background:#F2C811;"></div>
<svg style="left:450px;top:562px" width="11" height="11" viewBox="0 0 11 11"><path d="M5.5 1 V10 M1 5.5 H10" stroke="#4a4a4a" stroke-width="2"/></svg>
<div class="a" style="left:0px;top:580px;width:905px;height:1px;background:#262626;"></div>
<div class="a" style="left:0px;top:581px;width:905px;height:1px;background:#8c7a2a;"></div>
<div class="a" style="left:729px;top:152px;width:152px;height:428px;background:#444645;"></div>
<div class="a" style="left:733px;top:186px;width:148px;height:90px;background:#464646;"></div>
<div class="a" style="left:729px;top:152px;width:152px;height:34px;background:#252525;"></div>
<div class="a" style="left:729px;top:186px;width:4px;height:90px;background:#333;"></div>
<div class="a" style="left:729px;top:276px;width:152px;height:27px;background:#222222;"></div>
<div class="a" style="left:881px;top:152px;width:1px;height:428px;background:#333;"></div>
<div class="a" style="left:882px;top:152px;width:22px;height:428px;background:#212121;"></div>
<div class="a" style="left:904px;top:152px;width:1px;height:429px;background:#23384a;"></div>
<div class="t" style="top:165.00px;font-size:9.6px;color:#f4f4f4;font-weight:bold;left:738.00px;transform:scaleY(1.25);transform-origin:0 8px;-webkit-text-stroke:0">VISUALIZATIONS</div>
<svg style="left:865px;top:164px" width="7" height="10" viewBox="0 0 7 10"><path d="M1 0.8 L5.5 5 L1 9.2" fill="none" stroke="#ddd" stroke-width="1.2"/></svg>
<svg style="left:890px;top:164px" width="7" height="10" viewBox="0 0 7 10"><path d="M5.5 0.8 L1 5 L5.5 9.2" fill="none" stroke="#ddd" stroke-width="1.2"/></svg>
<div class="t" style="left:876px;top:208.5px;width:36px;font-size:9.7px;font-weight:bold;color:#fff;transform:rotate(90deg);text-align:center">FIELDS</div>
<svg style="left:736.0px;top:191px" width="13" height="13" viewBox="0 0 13 13"><rect x="0" y="1" width="9" height="3" fill="#F5A04A"/><rect x="0" y="4.5" width="7" height="2" fill="#A9C9CF"/><rect x="0" y="7" width="11" height="3" fill="#F5A04A"/><rect x="0" y="10" width="8" height="2" fill="#A9C9CF"/></svg>
<svg style="left:756.4px;top:191px" width="13" height="13" viewBox="0 0 13 13"><path d="M0.5 0 V12.5 H13" stroke="#9a9a9a" fill="none"/><rect x="3" y="4" width="3" height="8" fill="#F5A04A"/><rect x="3" y="9" width="3" height="3" fill="#A9C9CF"/><rect x="8" y="1" width="3" height="11" fill="#F5A04A"/><rect x="8" y="9" width="3" height="3" fill="#A9C9CF"/></svg>
<svg style="left:776.8px;top:191px" width="13" height="13" viewBox="0 0 13 13"><rect x="0" y="1" width="8" height="2" fill="#F2D8A8"/><rect x="0" y="3.5" width="11" height="2" fill="#7FA8D8"/><rect x="0" y="6.5" width="10" height="2" fill="#F2D8A8"/><rect x="0" y="9" width="7" height="2" fill="#A9C9CF"/></svg>
<svg style="left:797.2px;top:191px" width="13" height="13" viewBox="0 0 13 13"><path d="M0.5 0 V12.5 H13" stroke="#9a9a9a" fill="none"/><rect x="2" y="6" width="2" height="6" fill="#F2D8A8"/><rect x="4" y="1" width="2" height="11" fill="#7FA8D8"/><rect x="7.5" y="4" width="2" height="8" fill="#F2D8A8"/><rect x="9.5" y="6" width="2" height="6" fill="#7FA8D8"/></svg>
<svg style="left:817.6px;top:191px" width="13" height="13" viewBox="0 0 13 13"><path d="M0.5 0 V12.5" stroke="#9a9a9a"/><rect x="1" y="1" width="11" height="2.5" fill="#7FA8D8"/><rect x="1" y="4.5" width="8" height="2.5" fill="#7FA8D8"/><rect x="1" y="8" width="10" height="2.5" fill="#7FA8D8"/></svg>
<svg style="left:838.0px;top:191px" width="13" height="13" viewBox="0 0 13 13"><path d="M0.5 0 V12.5 H13" stroke="#9a9a9a" fill="none"/><rect x="2" y="1" width="4" height="11" fill="#7FA8D8"/><rect x="2" y="1" width="4" height="3" fill="#ccd"/><rect x="7.5" y="1" width="4" height="11" fill="#7FA8D8"/></svg>
<svg style="left:858.4px;top:191px" width="13" height="13" viewBox="0 0 13 13"><path d="M0.5 0 V12.5 H13" stroke="#9a9a9a" fill="none"/><path d="M1 10 L5 5 L8 8 L12 3" stroke="#ccc" fill="none"/><path d="M1 7 L4 9 L8 4 L12 6" stroke="#888" fill="none"/></svg>
<svg style="left:736.0px;top:208px" width="13" height="13" viewBox="0 0 13 13"><path d="M0 12 V5 L4 2 L7 6 L12 3 V12Z" fill="#F5A04A"/><path d="M0 12 V8 L4 5 L8 9 L12 7 V12Z" fill="#cfd8dc"/></svg>
<svg style="left:756.4px;top:208px" width="13" height="13" viewBox="0 0 13 13"><path d="M0 10 L3 3 L6 6 L9 2 L12 5 V12 H0Z" fill="#F5A04A"/><path d="M0 9 L4 6 L7 9 L12 7 V10 L7 11 L4 9 L0 11Z" fill="#7FA8D8"/><rect x="0" y="11" width="12" height="1.5" fill="#F2D8A8"/></svg>
<svg style="left:776.8px;top:208px" width="13" height="13" viewBox="0 0 13 13"><path d="M0.5 0 V12.5 H13" stroke="#9a9a9a" fill="none"/><rect x="3" y="3" width="2.5" height="9" fill="#F2D8A8"/><rect x="6.5" y="6" width="2.5" height="6" fill="#F5A04A"/><rect x="10" y="2" width="1.5" height="10" fill="#F2D8A8"/></svg>
<svg style="left:797.2px;top:208px" width="13" height="13" viewBox="0 0 13 13"><path d="M0.5 0 V12.5 H13" stroke="#9a9a9a" fill="none"/><rect x="2" y="2" width="2" height="10" fill="#7FA8D8"/><rect x="4.5" y="6" width="2" height="6" fill="#F2D8A8"/><rect x="7.5" y="3" width="2" height="9" fill="#F2D8A8"/><rect x="10" y="1" width="2" height="11" fill="#F5A04A"/></svg>
<svg style="left:817.6px;top:208px" width="13" height="13" viewBox="0 0 13 13"><path d="M0.5 0 V12.5 H13" stroke="#9a9a9a" fill="none"/><rect x="2" y="5" width="2.5" height="7" fill="#F2D8A8"/><rect x="5" y="3" width="2.5" height="9" fill="#F5A04A"/><rect x="8" y="2" width="2.5" height="10" fill="#F2D8A8"/><path d="M1 6 L5 3 L9 2 L12 1" stroke="#fff" fill="none"/></svg>
<svg style="left:838.0px;top:208px" width="13" height="13" viewBox="0 0 13 13"><path d="M0.5 0 V12.5" stroke="#9a9a9a"/><path d="M2.5 12 V1 L7 9 L10 1 V12" stroke="#5cc4a8" stroke-width="1.5" fill="none"/><path d="M3.5 12 V3 L7 10" stroke="#e08080" stroke-width="1" fill="none"/></svg>
<svg style="left:858.4px;top:208px" width="13" height="13" viewBox="0 0 13 13"><path d="M0.5 0 V12.5 H13" stroke="#9a9a9a" fill="none"/><circle cx="4" cy="4" r="1" fill="#bbb"/><circle cx="8" cy="6" r="1" fill="#ddd"/><circle cx="5" cy="8" r="1" fill="#999"/><circle cx="10" cy="3" r="1" fill="#ddd"/><circle cx="10" cy="9" r="1" fill="#bbb"/></svg>
<svg style="left:736.0px;top:225px" width="13" height="13" viewBox="0 0 13 13"><circle cx="6.5" cy="6.5" r="6" fill="#7FA8D8"/><path d="M6.5 6.5 L6.5 0.5 A6 6 0 0 0 0.7 5Z" fill="#F2D8A8"/><path d="M6.5 6.5 L0.7 5 A6 6 0 0 0 2.5 11Z" fill="#f5e0c0"/><path d="M6.5 0.5 V6.5 L0.7 5 M6.5 6.5 L2.5 11" stroke="#333" stroke-width="0.7" fill="none"/></svg>
<svg style="left:756.4px;top:225px" width="13" height="13" viewBox="0 0 13 13"><circle cx="6.5" cy="6.5" r="4.8" fill="none" stroke="#7FA8D8" stroke-width="3"/><path d="M6.5 1.7 A4.8 4.8 0 0 1 11 4.5" stroke="#F2D8A8" stroke-width="3" fill="none"/></svg>
<svg style="left:776.8px;top:225px" width="13" height="13" viewBox="0 0 13 13"><rect x="0" y="0" width="13" height="12" fill="#F0F0F0"/><path d="M0 4 H13 M0 8 H13 M4.5 0 V4 M9 0 V12 M4 8 V12" stroke="#3d3d3d" stroke-width="0.9"/></svg>
<svg style="left:797.2px;top:225px" width="13" height="13" viewBox="0 0 13 13"><circle cx="6.5" cy="6.5" r="6" fill="#F0F0F0"/><path d="M0.5 6.5 H12.5 M1.5 3.5 H11.5 M1.5 9.5 H11.5 M6.5 0.5 V12.5" stroke="#555" stroke-width="0.7"/><ellipse cx="6.5" cy="6.5" rx="3" ry="6" fill="none" stroke="#555" stroke-width="0.7"/></svg>
<svg style="left:817.6px;top:225px" width="13" height="13" viewBox="0 0 13 13"><path d="M0 1 L6 2 L7 4 L12 3 V6 L8 7 L6 10 L3 8 L0 9Z" fill="#7FA8D8"/><path d="M1 2 L5 3 L4 5 L1 4Z" fill="#fff"/><rect x="10" y="1" width="2" height="4" fill="#fff"/></svg>
<svg style="left:838.0px;top:225px" width="13" height="13" viewBox="0 0 13 13"><path d="M0 1 H13 L11 4 H2Z" fill="#7FA8D8"/><path d="M2 4 H11 L9.5 7 H3.5Z" fill="#F2D8A8"/><path d="M3.5 7 H9.5 L8.5 10 H4.5Z" fill="#F5A04A"/><path d="M4.5 10 H8.5 L7.5 12 H5.5Z" fill="#A9C9CF"/></svg>
<svg style="left:858.4px;top:225px" width="13" height="13" viewBox="0 0 13 13"><path d="M1.5 12 A5 5 0 0 1 11.5 12" stroke="#F2D8A8" stroke-width="3" fill="none"/><path d="M1.5 12 A5 5 0 0 1 4 7.5" stroke="#A9C9CF" stroke-width="3" fill="none"/></svg>
<svg style="left:736.0px;top:242px" width="13" height="13" viewBox="0 0 13 13"><rect x="0" y="1" width="13" height="10" fill="#F0F0F0"/><text x="6.5" y="8" font-size="6" text-anchor="middle" fill="#3d5f9f" font-family="Liberation Sans" font-weight="bold">123</text><rect x="3" y="9" width="7" height="0.8" fill="#333"/></svg>
<svg style="left:756.4px;top:242px" width="13" height="13" viewBox="0 0 13 13"><rect x="0" y="0" width="13" height="12" fill="#F0F0F0"/><rect x="2" y="2" width="1.5" height="9" fill="#888"/><path d="M5 3 H10 M5 6 H9 M5 9 H10" stroke="#8ab" stroke-width="1"/></svg>
<svg style="left:776.8px;top:242px" width="13" height="13" viewBox="0 0 13 13"><rect x="0" y="1" width="13" height="10" fill="#F0F0F0"/><path d="M3 6 L5 3 L7 6Z" fill="#555"/><path d="M8 3 H11 L9.5 6Z" fill="#F5A04A"/><rect x="3" y="8" width="7" height="0.8" fill="#333"/></svg>
<svg style="left:797.2px;top:242px" width="13" height="13" viewBox="0 0 13 13"><rect x="0" y="0" width="11" height="12" fill="#F0F0F0"/><rect x="0" y="0" width="11" height="2" fill="#7FA8D8"/><rect x="1.5" y="4" width="2" height="2" fill="#7FA8D8"/><rect x="1.5" y="7" width="2" height="2" fill="#F5A04A"/><path d="M6 6 H13 L10.5 9 V13 L8.5 12 V9Z" fill="#777"/></svg>
<svg style="left:817.6px;top:242px" width="13" height="13" viewBox="0 0 13 13"><rect x="-1" y="-1" width="15" height="14" fill="none" stroke="#E8C040" stroke-width="1.3"/><rect x="1" y="1" width="11" height="10" fill="#8a8a8a"/><path d="M1 4.5 H12 M1 8 H12 M4.5 1 V11 M8.5 1 V11" stroke="#555" stroke-width="0.8"/></svg>
<svg style="left:838.0px;top:242px" width="13" height="13" viewBox="0 0 13 13"><rect x="0" y="0" width="13" height="12" fill="#cfdcea"/><path d="M0 4 H13 M0 8 H13 M6.5 0 V12" stroke="#fff" stroke-width="1"/><rect x="0" y="0" width="6" height="4" fill="#9ab"/></svg>
<svg style="left:858.4px;top:242px" width="13" height="13" viewBox="0 0 13 13"><text x="6.5" y="12" font-size="13" text-anchor="middle" fill="#9fb4d0" font-family="Liberation Sans" font-weight="bold">R</text></svg>
<div class="a" style="left:737px;top:264.5px;width:2px;height:2px;background:#ddd;"></div>
<div class="a" style="left:741.5px;top:264.5px;width:2px;height:2px;background:#ddd;"></div>
<div class="a" style="left:746px;top:264.5px;width:2px;height:2px;background:#ddd;"></div>
<svg style="left:744px;top:282px" width="16" height="16" viewBox="0 0 16 16"><rect x="1" y="1" width="14" height="14" fill="none" stroke="#ddd" stroke-width="1" stroke-dasharray="1.5 1"/><path d="M1 5.5 H15 M1 10.5 H15" stroke="#ddd" stroke-width="1" stroke-dasharray="1.5 1"/></svg>
<svg style="left:772px;top:281px" width="16" height="17" viewBox="0 0 16 17"><rect x="1.5" y="1.5" width="12" height="5" rx="2" fill="none" stroke="#fff" stroke-width="1.3"/><path d="M13.5 4 H15 V9 H7.5 V11" fill="none" stroke="#fff" stroke-width="1.1"/><rect x="6" y="11" width="3" height="5.5" fill="none" stroke="#fff" stroke-width="1.1"/></svg>
<div class="a" style="left:767px;top:301px;width:27px;height:2px;background:#E8C040;"></div>
<svg style="left:802px;top:282px" width="16" height="16" viewBox="0 0 16 16"><circle cx="6.5" cy="6.5" r="5.5" fill="none" stroke="#ddd" stroke-width="1.2"/><path d="M10.5 10.5 L15 15" stroke="#ddd" stroke-width="1.5"/><path d="M3 9 L5 6 L7 8 L10 4" stroke="#ddd" fill="none" stroke-width="0.9"/><path d="M3 10 V8 M5 10 V7 M7 10 V9 M9 10 V6" stroke="#bbb" stroke-width="1"/></svg>
<div class="a" style="left:732px;top:306px;width:146px;height:22px;background:#262626;"></div>
<svg style="left:740px;top:309px" width="13" height="14" viewBox="0 0 13 14"><circle cx="8" cy="5.5" r="4" fill="none" stroke="#aaa" stroke-width="1.1"/><path d="M5.2 8.5 L1 13" stroke="#aaa" stroke-width="1.2"/></svg>
<div class="t" style="top:313.60px;font-size:8.9px;color:#a8a8a8;left:758.30px;">Search</div>
<div class="t" style="top:340.50px;font-size:8.85px;color:#f0f0f0;left:736.30px;">Horiz grid</div>
<div class="t" style="top:340.50px;font-size:8.85px;color:#f0f0f0;left:823.00px;">On</div>
<div class="a" style="left:845px;top:344px;width:13px;height:1.5px;background:#fff;"></div>
<svg style="left:856.5px;top:339px" width="11" height="11" viewBox="0 0 11 11"><circle cx="5.5" cy="5.5" r="5.3" fill="#fff"/></svg>
<div class="t" style="top:366.70px;font-size:8.85px;color:#f0f0f0;left:736.30px;">Horiz grid color</div>
<div class="a" style="left:837px;top:360.7px;width:33px;height:17.5px;border:1px solid #262626;background:#444645"></div>
<div class="a" style="left:841px;top:363.7px;width:10px;height:10px;border:1px solid #222;background:#D4AE3A"></div>
<svg style="left:854px;top:367.7px" width="6" height="4" viewBox="0 0 6 4"><path d="M0.5 0.5 H5.5 L3 3.5Z" fill="#ccc"/></svg>
<div class="t" style="top:392.60px;font-size:8.85px;color:#f0f0f0;left:736.30px;">Horiz grid ...</div>
<div class="a" style="left:824px;top:387px;width:47px;height:17.5px;border:1px solid #262626;background:#5A5A5A"></div>
<div class="t" style="top:392.00px;font-size:9px;color:#f0f0f0;left:736.50px;width:200px;text-align:center;">3</div>
<svg style="left:858.5px;top:390.5px" width="7" height="11" viewBox="0 0 7 11"><path d="M0.5 4.5 L3.5 1 L6.5 4.5Z M0.5 6.5 L3.5 10 L6.5 6.5Z" fill="#ddd"/></svg>
<div class="t" style="top:418.40px;font-size:8.85px;color:#f0f0f0;left:736.30px;">Row paddi...</div>
<div class="a" style="left:824px;top:413px;width:47px;height:17.5px;border:1px solid #262626;background:#5A5A5A"></div>
<div class="t" style="top:418.00px;font-size:9px;color:#f0f0f0;left:736.50px;width:200px;text-align:center;">4</div>
<svg style="left:858.5px;top:416.5px" width="7" height="11" viewBox="0 0 7 11"><path d="M0.5 4.5 L3.5 1 L6.5 4.5Z M0.5 6.5 L3.5 10 L6.5 6.5Z" fill="#ddd"/></svg>
<div class="t" style="top:444.80px;font-size:8.85px;color:#f0f0f0;left:736.30px;">Outline color</div>
<div class="a" style="left:837px;top:439.7px;width:33px;height:17.5px;border:1px solid #262626;background:#444645"></div>
<div class="a" style="left:841px;top:442.7px;width:10px;height:10px;border:1px solid #222;background:#1CB3A5"></div>
<svg style="left:854px;top:446.7px" width="6" height="4" viewBox="0 0 6 4"><path d="M0.5 0.5 H5.5 L3 3.5Z" fill="#ccc"/></svg>
<div class="t" style="top:471.70px;font-size:8.85px;color:#f0f0f0;left:736.30px;">Outline weight</div>
<div class="a" style="left:824px;top:465.5px;width:47px;height:17.5px;border:1px solid #262626;background:#5A5A5A"></div>
<div class="t" style="top:470.50px;font-size:9px;color:#f0f0f0;left:736.50px;width:200px;text-align:center;">4</div>
<svg style="left:858.5px;top:469.0px" width="7" height="11" viewBox="0 0 7 11"><path d="M0.5 4.5 L3.5 1 L6.5 4.5Z M0.5 6.5 L3.5 10 L6.5 6.5Z" fill="#ddd"/></svg>
<div class="t" style="top:497.50px;font-size:8.85px;color:#f0f0f0;left:736.30px;">Text size</div>
<div class="a" style="left:824px;top:491.8px;width:47px;height:17.5px;border:1px solid #262626;background:#5A5A5A"></div>
<div class="t" style="top:496.80px;font-size:9px;color:#f0f0f0;left:736.50px;width:200px;text-align:center;">14</div>
<svg style="left:858.5px;top:495.3px" width="7" height="11" viewBox="0 0 7 11"><path d="M0.5 4.5 L3.5 1 L6.5 4.5Z M0.5 6.5 L3.5 10 L6.5 6.5Z" fill="#ddd"/></svg>
<div class="t" style="top:523.40px;font-size:8.85px;color:#f0f0f0;left:736.30px;">Image height</div>
<div class="a" style="left:793px;top:518.5px;width:24px;height:17px;border:1px solid #2e2e2e;background:#595959"></div>
<div class="t" style="top:522.80px;font-size:9px;color:#f0f0f0;left:705.00px;width:200px;text-align:center;">24</div>
<div class="a" style="left:833px;top:526px;width:39px;height:1px;background:#ddd;"></div>
<svg style="left:823.5px;top:521.5px" width="10" height="10" viewBox="0 0 10 10"><circle cx="5" cy="5" r="4.2" fill="#444645" stroke="#eee" stroke-width="1.1"/></svg>
<div class="t" style="top:552.60px;font-size:8.7px;color:#E6B450;left:736.30px;">Revert to default</div>
<div class="t" style="top:581.00px;font-size:8.8px;color:#ddd;left:746.00px;">Column headers</div>
<div class="a" style="left:876.5px;top:393px;width:3.5px;height:98px;background:#6e6e6e;"></div>
<div class="a" style="left:731px;top:431px;width:162px;height:135px;border:2px solid #F3E824"></div>
<div class="a" style="left:0px;top:582px;width:905px;height:45px;background:#F2C811;"></div>
</body></html>
